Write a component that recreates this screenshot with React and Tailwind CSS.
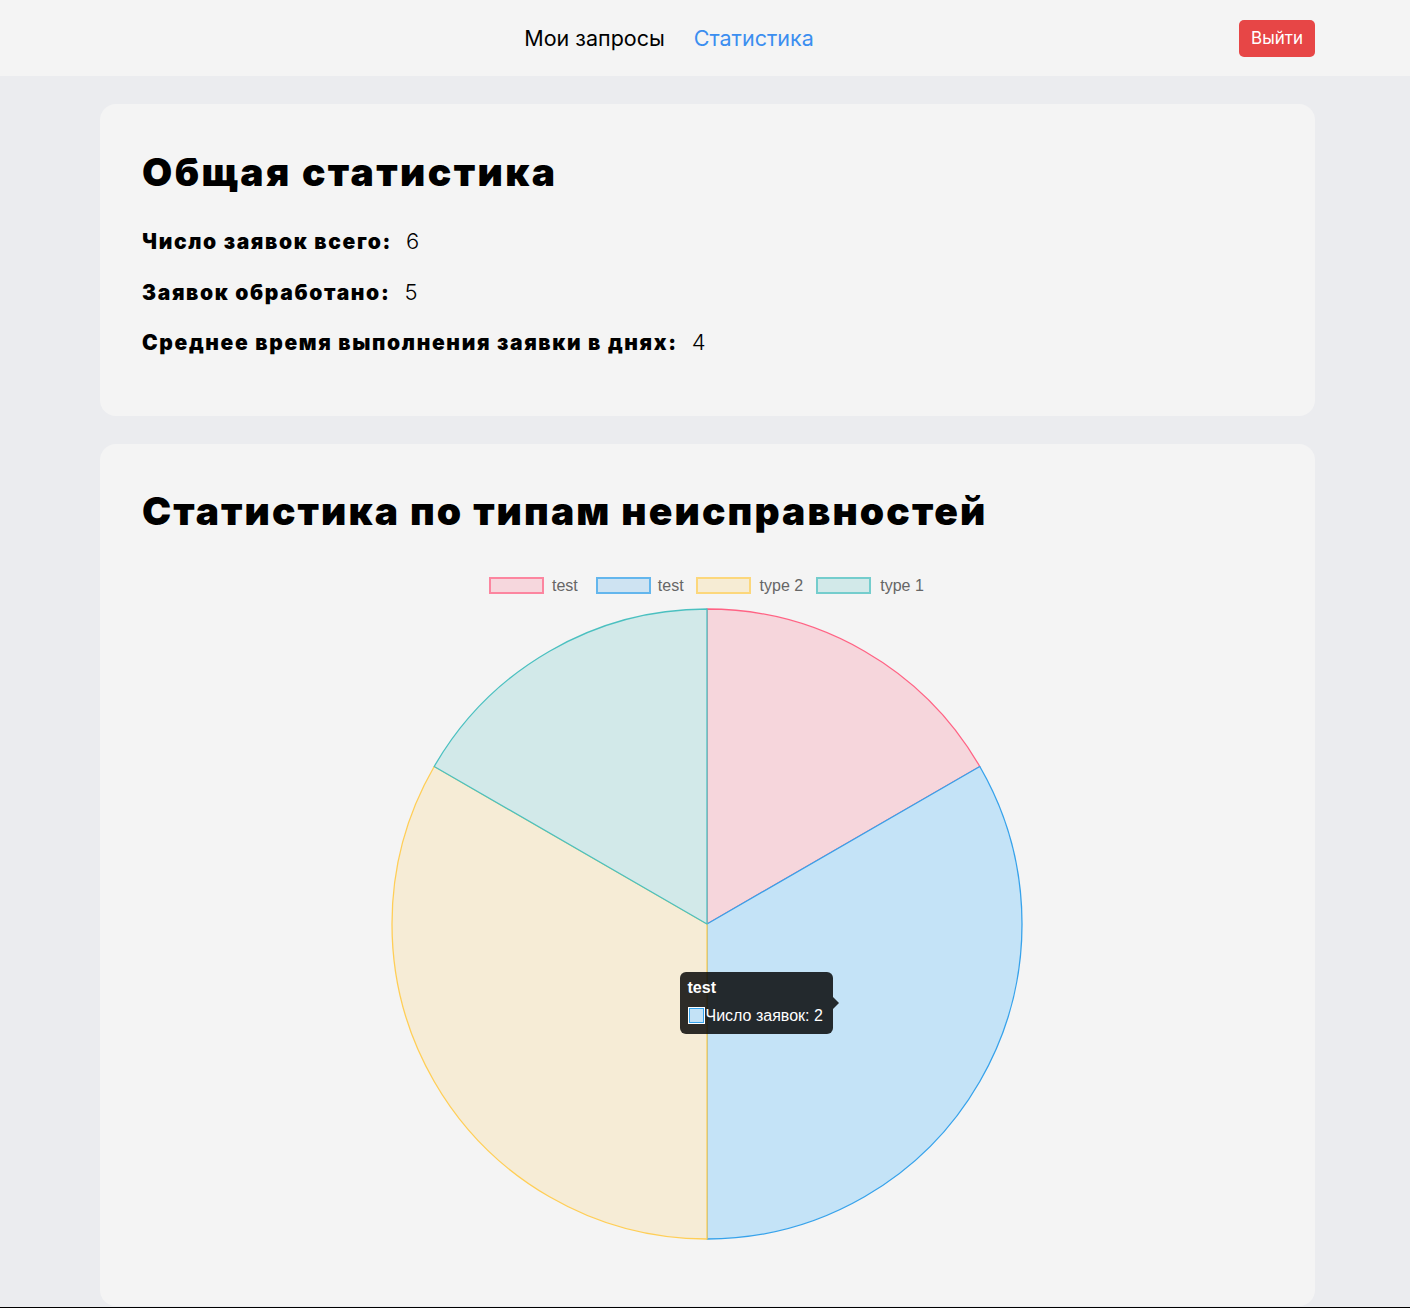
import React from "react";

function Pie() {
  const c = 316;
  const r = 315;
  const p30x = (c + r * Math.cos(Math.PI / 6)).toFixed(2);
  const p30y = (c - r * 0.5).toFixed(2);
  const p210x = (c - r * Math.cos(Math.PI / 6)).toFixed(2);
  const slices = [
    { d: `M${c},${c} L${c},${c - r} A${r},${r} 0 0 1 ${p30x},${p30y} Z`, fill: "#f6d6dc", stroke: "rgb(255,99,132)" },
    { d: `M${c},${c} L${p30x},${p30y} A${r},${r} 0 0 1 ${c},${c + r} Z`, fill: "#c4e3f7", stroke: "rgb(54,162,235)" },
    { d: `M${c},${c} L${c},${c + r} A${r},${r} 0 0 1 ${p210x},${p30y} Z`, fill: "#f6ecd6", stroke: "rgb(255,206,86)" },
    { d: `M${c},${c} L${p210x},${p30y} A${r},${r} 0 0 1 ${c},${c - r} Z`, fill: "#d2e9e9", stroke: "rgb(75,192,192)" },
  ];
  return (
    <svg width="632" height="632" viewBox="0 0 632 632" className="block">
      {slices.map((s, i) => (
        <path key={i} d={s.d} fill={s.fill} stroke={s.stroke} strokeWidth="1.3" strokeLinejoin="round" />
      ))}
    </svg>
  );
}

export default function App() {
  return (
    <div className="min-h-[1308px] bg-[#ebecef] font-['Inter',sans-serif] flex flex-col">
      <header className="h-[76px] bg-[#f4f4f4] relative flex items-center justify-center">
        <nav className="mr-[72px] mt-[2px] flex items-center gap-[29px] text-[21.5px] leading-none">
          <span className="text-black">Мои запросы</span>
          <span className="text-[#3b8ef0]">Статистика</span>
        </nav>
        <button className="absolute right-[95px] top-[20px] h-[37px] w-[76px] rounded-[5px] bg-[#e74646] text-white text-[17px] leading-none">
          Выйти
        </button>
      </header>

      <main className="flex flex-col items-center pl-[5px] pt-[28px] gap-[28px]">
        <section className="w-[1215px] h-[312px] rounded-[16px] bg-[#f4f4f4] px-[42px] pt-[46px]">
          <h1 className="text-[39px] leading-[44px] font-black tracking-[2.4px] text-black">
            Общая статистика
          </h1>
          <div className="mt-[33px] flex flex-col gap-[21.5px]">
            {[
              ["Число заявок всего:", "6"],
              ["Заявок обработано:", "5"],
              ["Среднее время выполнения заявки в днях:", "4"],
            ].map(([k, v], i) => (
              <p key={i} className="flex items-baseline leading-[29px]">
                <span className="text-[21px] font-black tracking-[1.65px]">{k}</span>
                <span className="ml-[14px] font-light text-[22px]">{v}</span>
              </p>
            ))}
          </div>
        </section>

        <section className="w-[1215px] h-[862px] rounded-[16px] bg-[#f4f4f4] px-[42px] pt-[45px] flex flex-col">
          <h2 className="text-[39px] leading-[44px] font-black tracking-[2.1px] text-black">
            Статистика по типам неисправностей
          </h2>
          <div className="mt-[44px] pl-[347px] flex justify-start font-['Liberation_Sans',sans-serif] text-[16px] text-[#666] leading-none">
            <div className="flex items-center gap-[8px]">
              <span className="block w-[55px] h-[17px] border-2 bg-[rgba(255,99,132,0.2)] border-[rgba(255,99,132,0.7)]" />
              <span>test</span>
            </div>
            <div className="ml-[18px] flex items-center gap-[7px]">
              <span className="block w-[55px] h-[17px] border-2 bg-[rgba(54,162,235,0.2)] border-[rgba(54,162,235,0.7)]" />
              <span>test</span>
            </div>
            <div className="ml-[12px] flex items-center gap-[9px]">
              <span className="block w-[55px] h-[17px] border-2 bg-[rgba(255,206,86,0.2)] border-[rgba(255,206,86,0.7)]" />
              <span>type 2</span>
            </div>
            <div className="ml-[13px] flex items-center gap-[9px]">
              <span className="block w-[55px] h-[17px] border-2 bg-[rgba(75,192,192,0.2)] border-[rgba(75,192,192,0.7)]" />
              <span>type 1</span>
            </div>
          </div>
          <div className="relative self-center mt-[14px] mr-[2px]">
            <Pie />
            <div className="absolute left-[289px] top-[364px] w-[153px] h-[62px] rounded-[6px] bg-[rgba(0,0,0,0.82)] text-white font-['Liberation_Sans',sans-serif] text-[16px] px-[8px] pt-[6px]">
              <div className="font-bold leading-[19px]">test</div>
              <div className="mt-[9px] flex items-center leading-[19px]">
                <span className="block w-[17px] h-[17px] bg-white p-[1px] mr-[1px]">
                  <span className="block w-full h-full border-[1.5px] border-[rgb(54,162,235)] bg-[#c3e2f6]" />
                </span>
                <span>Число заявок: 2</span>
              </div>
              <span className="absolute right-[-6px] top-[25px] w-0 h-0 border-y-[6px] border-y-transparent border-l-[6px] border-l-[rgba(0,0,0,0.82)]" />
            </div>
          </div>
        </section>
      </main>
      <div className="h-[1px]" />
      <div className="h-[1px] bg-black w-full" />
    </div>
  );
}
